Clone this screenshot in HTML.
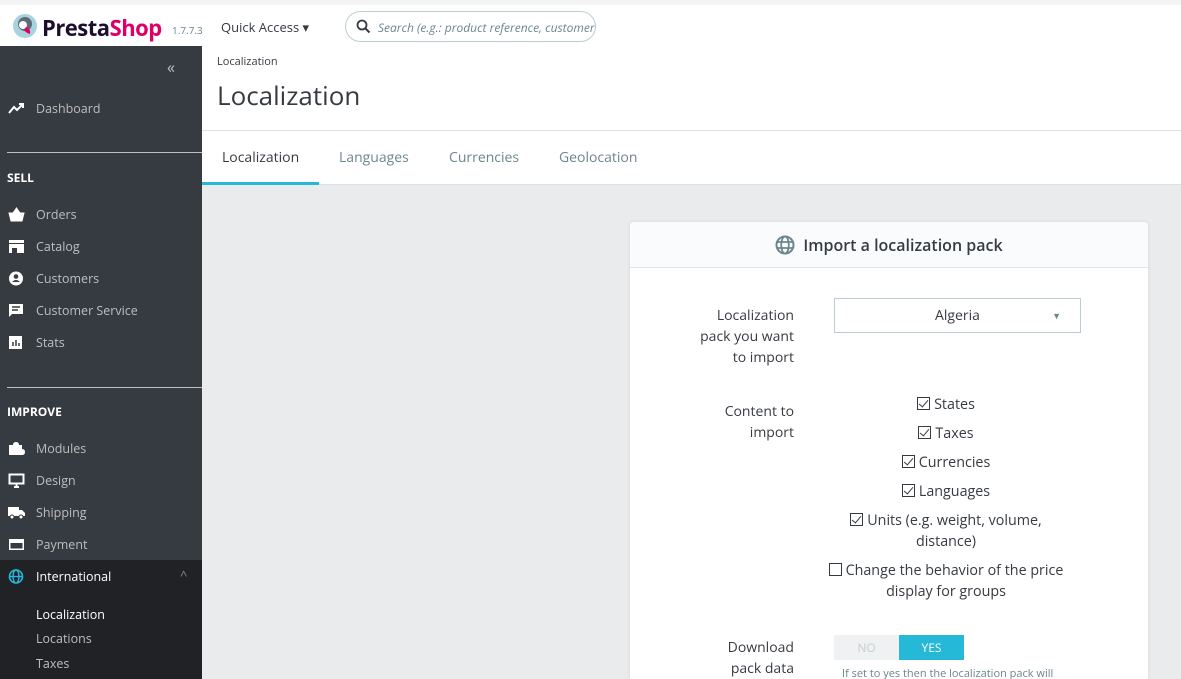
<!DOCTYPE html>
<html style="width:1181px;height:679px;overflow:hidden"><head><meta charset="utf-8"><style>
*{box-sizing:border-box;margin:0;padding:0}
body{width:1181px;height:679px;overflow:hidden;font-family:"Open Sans","Liberation Sans",sans-serif;background:#eaebec;position:relative;color:#363a41}
.top{position:absolute;left:0;top:0;width:1181px;height:46px;background:#fff;border-top:5px solid #f4f4f4}
.sb{position:absolute;left:0;top:46px;width:202px;height:633px;background:#363a41;color:#bebebe;font-size:12.5px;overflow:hidden}
.it{position:absolute;left:36px;margin-top:-1px}
.ic{position:absolute;left:8px;width:17px;height:15px}
.hd{position:absolute;left:7px;color:#fff;font-weight:bold;font-size:12px;margin-top:-1px}
.ln{position:absolute;left:7px;width:195px;height:1px;background:#bebebe}
.main{position:absolute;left:202px;top:46px;width:979px;height:139px;background:#fff;border-bottom:1px solid #dfe1e3}
.tab{position:absolute;top:102px;font-size:14px;color:#6c868e}
.card{position:absolute;left:630px;top:222px;width:518px;height:457px;background:#fff;box-shadow:0 0 3px #cfd3d6;border-radius:4px 4px 0 0;overflow:hidden}
.ch{height:46px;background:#fafbfc;border-bottom:1px solid #dbe6e9;font-size:16px;font-weight:600;text-align:center;line-height:46px;color:#363a41}
.lab{position:absolute;right:354px;text-align:right;font-size:14px;line-height:21px;color:#363a41}
.cb{position:absolute;left:180px;width:272px;text-align:center;font-size:14.3px;line-height:21px}
.box{display:inline-block;width:13px;height:13px;border:1px solid #363a41;vertical-align:-1px;margin-right:4px;position:relative}
.box.c:after{content:"";position:absolute;left:3px;top:0;width:4px;height:8px;border:solid #363a41;border-width:0 1.5px 1.5px 0;transform:rotate(40deg)}
</style></head><body>
<div class="top">
 <svg style="position:absolute;left:12px;top:8px" width="26" height="26"><circle cx="13" cy="13" r="12" fill="#a7d3de"/><circle cx="13" cy="11" r="7" fill="#5f6a73"/><circle cx="11" cy="12" r="4" fill="#fff"/><path d="M14 14 q5 2 4 7 q-4-1-6-4z" fill="#df0067"/></svg>
 <div style="position:absolute;left:42px;top:8px;font-size:22px;font-weight:bold;color:#1f0d2e;letter-spacing:-0.5px">Presta<span style="color:#df0067">Shop</span></div>
 <div style="position:absolute;left:172px;top:18px;font-size:10px;color:#6c868e">1.7.7.3</div>
 <div style="position:absolute;left:221px;top:13px;font-size:13px;color:#363a41">Quick Access ▾</div>
 <div style="position:absolute;left:345px;top:6px;width:251px;height:31px;border:1px solid #bbcdd2;border-radius:16px;overflow:hidden;white-space:nowrap">
  <svg style="position:absolute;left:10px;top:7px" width="15" height="15"><circle cx="6" cy="6" r="4.5" stroke="#363a41" stroke-width="1.8" fill="none"/><path d="M9.5 9.5 L13.5 13.5" stroke="#363a41" stroke-width="2"/></svg>
  <span style="position:absolute;left:32px;top:7px;font-size:12px;font-style:italic;color:#6c868e">Search (e.g.: product reference, customer</span></div>
</div>
<div class="sb">
 <div style="position:absolute;left:167px;top:10px;color:#bebebe;font-size:16px">«</div>
 <svg class="ic" style="top:55px" viewBox="0 0 17 15"><path d="M1 12 L6 6 L9 9 L15 3 M11 3 H15 V7" stroke="#fff" stroke-width="2" fill="none"/></svg>
 <div class="it" style="top:55px">Dashboard</div>
 <div class="ln" style="top:106px"></div>
 <div class="hd" style="top:124px">SELL</div>
 <svg class="ic" style="top:161px" viewBox="0 0 17 15"><path d="M1 6 H16 L14 14 H3Z M5 6 L8.5 1 L12 6" fill="#fff" stroke="#fff"/></svg><div class="it" style="top:161px">Orders</div>
 <svg class="ic" style="top:193px" viewBox="0 0 17 15"><rect x="1" y="1" width="15" height="3" fill="#fff"/><rect x="1" y="5" width="15" height="9" fill="#fff"/><rect x="4" y="9" width="5" height="5" fill="#363a41"/></svg><div class="it" style="top:193px">Catalog</div>
 <svg class="ic" style="top:225px" viewBox="0 0 17 15"><circle cx="8" cy="7.5" r="7" fill="#fff"/><circle cx="8" cy="5.5" r="2.3" fill="#363a41"/><path d="M4 11 q4-4 8 0" fill="#363a41"/></svg><div class="it" style="top:225px">Customers</div>
 <svg class="ic" style="top:257px" viewBox="0 0 17 15"><path d="M1 1 H15 V11 H4 L1 14Z" fill="#fff"/><path d="M4 4 H12 M4 7 H10" stroke="#363a41" stroke-width="1.5"/></svg><div class="it" style="top:257px">Customer Service</div>
 <svg class="ic" style="top:289px" viewBox="0 0 17 15"><rect x="1" y="1" width="13" height="13" fill="#fff"/><path d="M5 11V7 M8 11V5 M11 11V8" stroke="#363a41" stroke-width="1.5"/></svg><div class="it" style="top:289px">Stats</div>
 <div class="ln" style="top:341px"></div>
 <div class="hd" style="top:358px">IMPROVE</div>
 <svg class="ic" style="top:395px" viewBox="0 0 17 15"><path d="M1 4 H5 q0-3 3-3 q3 0 3 3 H14 V8 q3 0 3 3 q0 3-3 3 H1Z" fill="#fff"/></svg><div class="it" style="top:395px">Modules</div>
 <svg class="ic" style="top:427px" viewBox="0 0 17 15"><rect x="1.5" y="1.5" width="14" height="9" stroke="#fff" stroke-width="2" fill="none"/><path d="M6 14 H11 M8.5 11 V14" stroke="#fff" stroke-width="2"/></svg><div class="it" style="top:427px">Design</div>
 <svg class="ic" style="top:459px" viewBox="0 0 17 15"><path d="M0 2 H11 V11 H0Z M11 5 H14 L17 8 V11 H11Z" fill="#fff"/><circle cx="4" cy="12" r="2" fill="#fff" stroke="#363a41"/><circle cx="13" cy="12" r="2" fill="#fff" stroke="#363a41"/></svg><div class="it" style="top:459px">Shipping</div>
 <svg class="ic" style="top:491px" viewBox="0 0 17 15"><rect x="1" y="2" width="15" height="11" fill="#fff"/><rect x="2.5" y="6" width="12" height="5.5" fill="#363a41"/></svg><div class="it" style="top:491px">Payment</div>
 <div style="position:absolute;left:0;top:514px;width:202px;height:119px;background:#202226"></div>
 <svg class="ic" style="top:523px" viewBox="0 0 17 15"><circle cx="8" cy="7.5" r="6.5" stroke="#25b9d7" stroke-width="1.6" fill="none"/><ellipse cx="8" cy="7.5" rx="3" ry="6.5" stroke="#25b9d7" stroke-width="1.4" fill="none"/><path d="M1.5 7.5 H14.5" stroke="#25b9d7" stroke-width="1.4"/></svg>
 <div class="it" style="top:523px;color:#fff">International</div>
 <div style="position:absolute;left:180px;top:520px;color:#888;font-size:13px">^</div>
 <div class="it" style="top:561px;color:#fff">Localization</div>
 <div class="it" style="top:585px">Locations</div>
 <div class="it" style="top:610px">Taxes</div>
</div>
<div class="main">
 <div style="position:absolute;left:15px;top:8px;font-size:11px;color:#363a41">Localization</div>
 <div style="position:absolute;left:15px;top:31px;font-size:26px;color:#363a41">Localization</div>
 <div style="position:absolute;left:0;top:84px;width:979px;height:1px;background:#dfe1e3"></div>
 <div style="position:absolute;left:0;top:136px;width:117px;height:3px;background:#25b9d7"></div>
 <div class="tab" style="left:20px;color:#363a41">Localization</div>
 <div class="tab" style="left:137px">Languages</div>
 <div class="tab" style="left:247px">Currencies</div>
 <div class="tab" style="left:357px">Geolocation</div>
</div>
<div class="card">
 <div class="ch"><svg width="20" height="20" style="vertical-align:-4px;margin-right:8px" viewBox="0 0 20 20"><circle cx="10" cy="10" r="8.5" stroke="#6c868e" stroke-width="2" fill="none"/><ellipse cx="10" cy="10" rx="3.8" ry="8.5" stroke="#6c868e" stroke-width="1.8" fill="none"/><path d="M1.5 7 H18.5 M1.5 13 H18.5" stroke="#6c868e" stroke-width="1.8"/></svg>Import a localization pack</div>
 <div class="lab" style="top:83px">Localization<br>pack you want<br>to import</div>
 <div style="position:absolute;left:204px;top:76px;width:247px;height:35px;border:1px solid #bbcdd2;text-align:center;line-height:33px;font-size:14px">Algeria<span style="position:absolute;right:19px;top:0;font-size:9px;color:#6c868e">▼</span></div>
 <div class="lab" style="top:179px">Content to<br>import</div>
 <div class="cb" style="top:172px"><span class="box c"></span>States</div>
 <div class="cb" style="top:201px"><span class="box c"></span>Taxes</div>
 <div class="cb" style="top:230px"><span class="box c"></span>Currencies</div>
 <div class="cb" style="top:259px"><span class="box c"></span>Languages</div>
 <div class="cb" style="top:288px"><span class="box c"></span>Units (e.g. weight, volume,<br>distance)</div>
 <div class="cb" style="top:338px"><span class="box"></span>Change the behavior of the price<br>display for groups</div>
 <div class="lab" style="top:415px">Download<br>pack data</div>
 <div style="position:absolute;left:204px;top:413px;width:65px;height:25px;background:#eff1f2;color:#c7cdd1;font-size:12px;text-align:center;line-height:25px">NO</div>
 <div style="position:absolute;left:269px;top:413px;width:65px;height:25px;background:#25b9d7;color:#fff;font-size:12px;text-align:center;line-height:25px">YES</div>
 <div style="position:absolute;left:212px;top:444px;font-size:11px;color:#6c868e;white-space:nowrap">If set to yes then the localization pack will</div>
</div>
</body></html>
